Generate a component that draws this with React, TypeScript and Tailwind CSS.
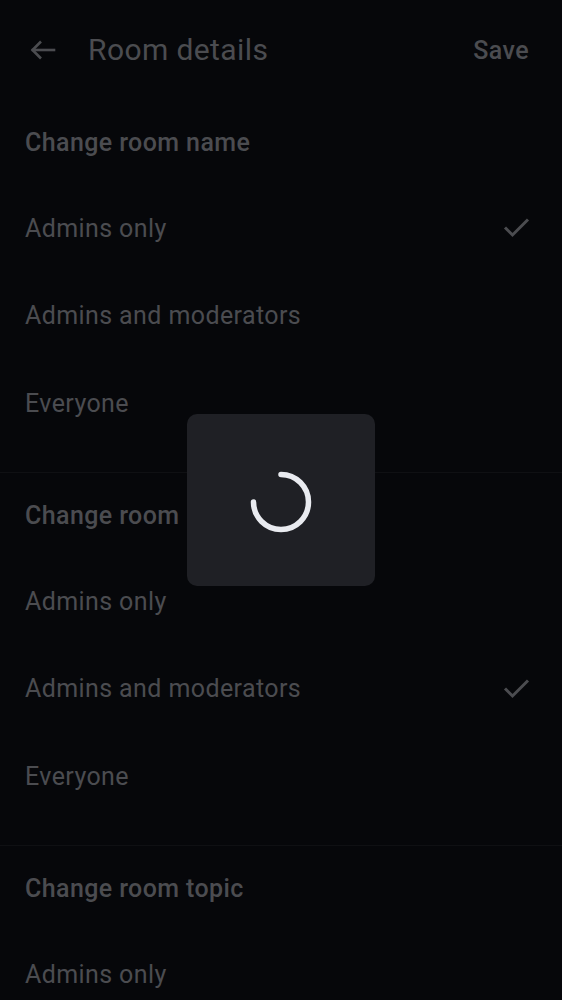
import React from 'react';

type Option = { label: string; checked?: boolean };
type Section = { title: string; options: Option[] };

const SECTIONS: Section[] = [
  {
    title: 'Change room name',
    options: [{ label: 'Admins only', checked: true }, { label: 'Admins and moderators' }, { label: 'Everyone' }],
  },
  {
    title: 'Change room',
    options: [{ label: 'Admins only' }, { label: 'Admins and moderators', checked: true }, { label: 'Everyone' }],
  },
  {
    title: 'Change room topic',
    options: [{ label: 'Admins only' }, { label: 'Admins and moderators' }, { label: 'Everyone' }],
  },
];

function BackArrow() {
  return (
    <svg width="28" height="24" viewBox="0 0 28 24" fill="none" stroke="currentColor" strokeWidth="2.6" strokeLinecap="square">
      <path d="M5 12h21" />
      <path d="M13 3.5 4.5 12l8.5 8.5" strokeLinecap="butt" />
    </svg>
  );
}

function CheckMark() {
  return (
    <svg width="30" height="24" viewBox="0 0 30 24" fill="none" stroke="currentColor" strokeWidth="3">
      <path d="M3 11.5l7.5 7.5L26 3.5" />
    </svg>
  );
}

function Spinner() {
  // 270° arc from 12 o'clock, clockwise to 9 o'clock
  return (
    <svg width="64" height="64" viewBox="0 0 64 64" fill="none">
      <path
        d="M32 4.5 A27.5 27.5 0 1 1 4.5 32"
        stroke="#e9ebf0"
        strokeWidth="5.5"
        strokeLinecap="round"
      />
    </svg>
  );
}

export default function App() {
  return (
    <div
      className="relative w-[562px] h-[1000px] overflow-hidden bg-[#06070a] text-[#4b4c50]"
      style={{ fontFamily: 'Roboto, "Liberation Sans", sans-serif' }}
    >
      {/* Top bar */}
      <div className="h-[100px] flex items-center pl-[28px] pr-[33px]">
        <div className="w-[30px] flex items-center">
          <BackArrow />
        </div>
        <h1 className="ml-[30px] text-[30px] leading-none font-normal tracking-[0.4px]">Room details</h1>
        <button className="ml-auto text-[25px] leading-none font-medium tracking-[0.4px]">Save</button>
      </div>

      {/* Permission sections */}
      <div>
        {SECTIONS.map((s, i) => (
          <div key={i} className="border-b border-[#0f1013] pb-[25px]">
            <div className="h-[84.5px] flex items-center px-[25px]">
              <span className="text-[25px] leading-none font-medium tracking-[0.4px]">{s.title}</span>
            </div>
            {s.options.map((o, j) => (
              <div key={j} className="h-[87.5px] flex items-center justify-between pl-[25px] pr-[30px]">
                <span className="text-[25px] leading-none tracking-[0.4px]">{o.label}</span>
                {o.checked && <CheckMark />}
              </div>
            ))}
          </div>
        ))}
      </div>

      {/* Loading dialog */}
      <div className="absolute left-[187px] top-[414px] w-[188px] h-[172px] rounded-[10px] bg-[#1f2025] flex items-center justify-center">
        <div className="mt-[4px]">
          <Spinner />
        </div>
      </div>
    </div>
  );
}
